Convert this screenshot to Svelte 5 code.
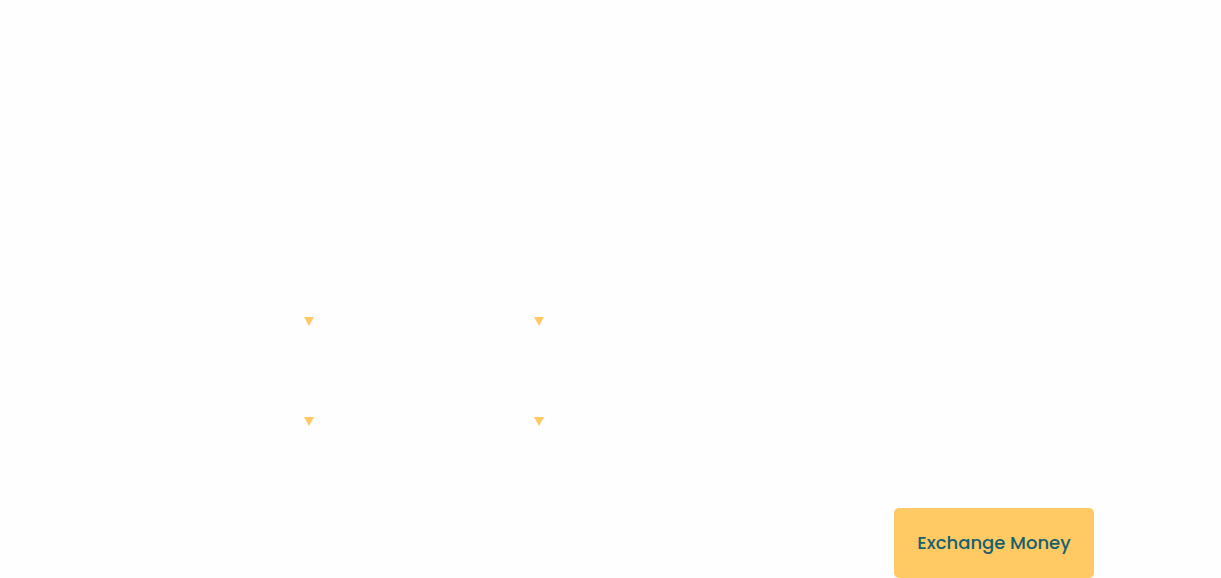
<script>
  const rows = [
    ['First source currency', 'Second source currency'],
    ['First target currency', 'Second target currency'],
  ];
</script>

<form class="exchange">
  <div class="fields">
    {#each rows as row}
      {#each row as name}
        <div class="field">
          <select aria-label={name}></select>
          <svg class="arrow" viewBox="0 0 10 9" aria-hidden="true">
            <path d="M0 0H10L5 9Z" />
          </svg>
        </div>
      {/each}
    {/each}
  </div>
  <button type="button">Exchange Money</button>
</form>

<style>
  :global(body) {
    margin: 0;
    background: #fefefe;
  }

  .exchange {
    display: flex;
    flex-direction: column;
    gap: 52px;
    padding: 286px 127px 0;
    font-family: Poppins, Inter, sans-serif;
  }

  .fields {
    display: grid;
    grid-template-columns: repeat(2, 200px);
    gap: 30px;
  }

  .field {
    display: grid;
    align-items: center;
    justify-items: end;
  }

  select {
    grid-area: 1 / 1;
    width: 100%;
    height: 70px;
    padding: 0 36px 0 20px;
    border: 0;
    background: transparent;
    color: #17616e;
    font: inherit;
    appearance: none;
  }

  .arrow {
    grid-area: 1 / 1;
    width: 10px;
    height: 9px;
    margin-right: 13px;
    fill: #ffc963;
    pointer-events: none;
  }

  button {
    align-self: flex-end;
    width: 200px;
    height: 70px;
    padding: 0;
    border: 0;
    border-radius: 5px;
    background: #ffc963;
    color: #17616e;
    font-family: inherit;
    font-size: 18px;
    font-weight: 500;
    line-height: 28px;
    cursor: pointer;
  }
</style>
